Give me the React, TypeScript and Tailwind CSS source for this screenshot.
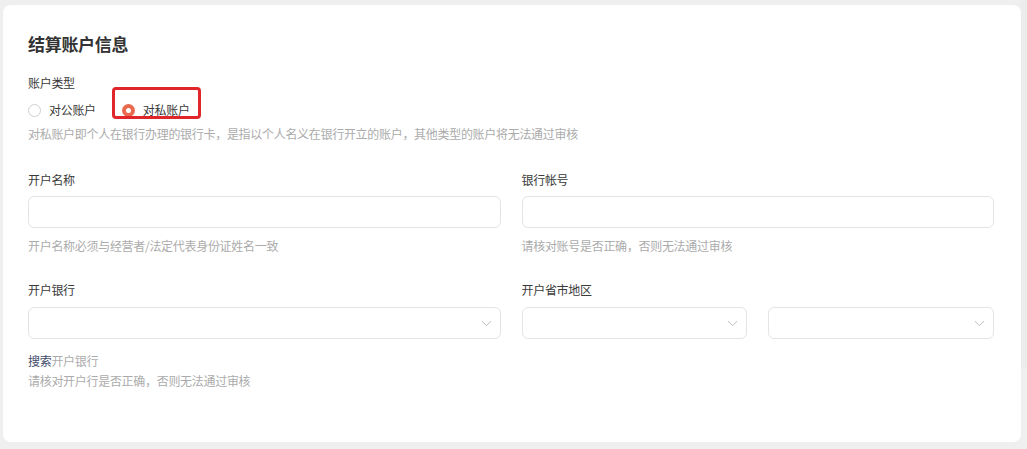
import React from 'react';

const font = { fontFamily: '"Noto Sans CJK SC", "Noto Sans", sans-serif' };

const Chevron = () => (
  <svg width="11" height="7" viewBox="0 0 11 7" fill="none" className="shrink-0">
    <path d="M1 1.2L5.5 5.6L10 1.2" stroke="#bdbdbd" strokeWidth="1" />
  </svg>
);

const Select = () => (
  <div className="h-[32px] rounded-[6px] border border-[#e4e4e4] bg-white flex items-center justify-end pr-[8px]">
    <Chevron />
  </div>
);

const Input = () => <div className="h-[32px] rounded-[6px] border border-[#e4e4e4] bg-white" />;

const Label = ({ children }: { children: React.ReactNode }) => (
  <div className="text-[12px] leading-[20px] tracking-[-0.3px] text-[#3a3a3a]">{children}</div>
);

const Help = ({ children }: { children: React.ReactNode }) => (
  <div className="text-[12px] leading-[18px] tracking-[-0.3px] text-[#ababab]">{children}</div>
);

export default function App() {
  return (
    <div className="relative w-[1027px] h-[449px] bg-[#efefef] pl-[3px] pr-[6px] pt-[5px] overflow-hidden" style={font}>
      <div className="bg-white rounded-[8px] h-[437px] pt-[27px] pl-[25px] pr-[27px]">
        <div className="text-[17px] leading-[24px] font-bold tracking-[-0.3px] text-[#333]">结算账户信息</div>

        <div className="mt-[17px]">
          <Label>账户类型</Label>
        </div>

        <div className="mt-[7px] flex items-center h-[20px] text-[12px] tracking-[-0.3px] text-[#3a3a3a]">
          <div className="flex items-center">
            <span className="w-[13px] h-[13px] rounded-full border border-[#cfcfcf] bg-white" />
            <span className="ml-[8px]">对公账户</span>
          </div>
          <div className="relative flex items-center ml-[26px]">
            <span className="w-[13px] h-[13px] rounded-full bg-[#e8694d] flex items-center justify-center">
              <span className="w-[5px] h-[5px] rounded-full bg-white" />
            </span>
            <span className="ml-[8px]">对私账户</span>
            <div className="absolute left-[-10px] top-[-14px] w-[89px] h-[32px] border-[3px] border-[#e0262a] rounded-[4px]" />
          </div>
        </div>

        <div className="mt-[5px]">
          <Help>对私账户即个人在银行办理的银行卡，是指以个人名义在银行开立的账户，其他类型的账户将无法通过审核</Help>
        </div>

        <div className="mt-[27px] grid grid-cols-2 gap-x-[21px]">
          <div>
            <Label>开户名称</Label>
            <div className="mt-[6px]">
              <Input />
            </div>
            <div className="mt-[9px]">
              <Help>开户名称必须与经营者/法定代表身份证姓名一致</Help>
            </div>
          </div>
          <div>
            <Label>银行帐号</Label>
            <div className="mt-[6px]">
              <Input />
            </div>
            <div className="mt-[9px]">
              <Help>请核对账号是否正确，否则无法通过审核</Help>
            </div>
          </div>
        </div>

        <div className="mt-[25px] grid grid-cols-2 gap-x-[21px]">
          <div>
            <Label>开户银行</Label>
            <div className="mt-[7px]">
              <Select />
            </div>
            <div className="mt-[12px] text-[12px] leading-[20px] tracking-[-0.3px]">
              <span className="text-[#3d4a6a]">搜索</span>
              <span className="text-[#ababab]">开户银行</span>
            </div>
            <div className="mt-[1px]">
              <Help>请核对开户行是否正确，否则无法通过审核</Help>
            </div>
          </div>
          <div>
            <Label>开户省市地区</Label>
            <div className="mt-[7px] grid grid-cols-2 gap-x-[21px]">
              <Select />
              <Select />
            </div>
          </div>
        </div>
      </div>
      <div className="absolute right-0 top-0 w-[6px] h-[368px] bg-[#ececec]" />
    </div>
  );
}
